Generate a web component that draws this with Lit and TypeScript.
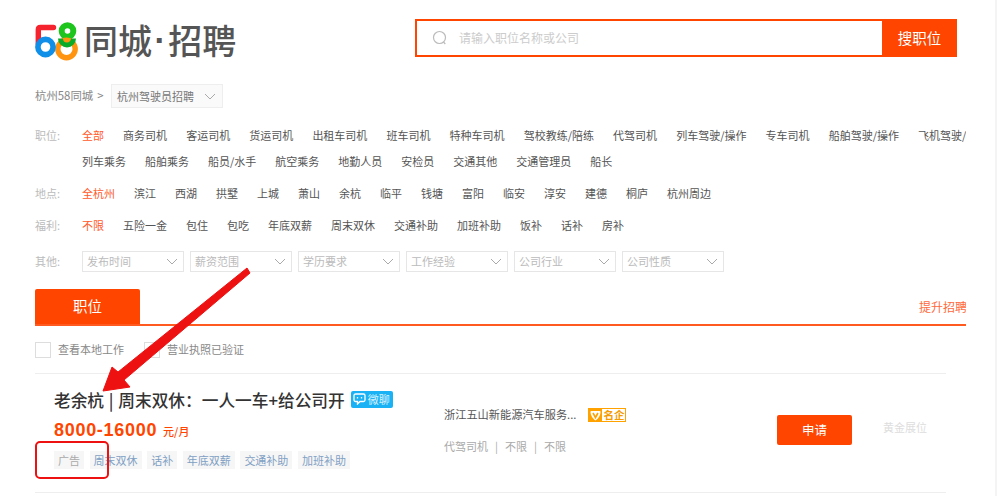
import { LitElement, html, css, svg } from "lit";
import { customElement } from "lit/decorators.js";

const chevron = html`<svg class="chev" width="12" height="7" viewBox="0 0 12 7"><path d="M1 1l5 5 5-5" fill="none" stroke="#aaa" stroke-width="1"/></svg>`;

const row1 = ["商务司机","客运司机","货运司机","出租车司机","班车司机","特种车司机","驾校教练/陪练","代驾司机","列车驾驶/操作","专车司机","船舶驾驶/操作","飞机驾驶/"];
const row2 = ["列车乘务","船舶乘务","船员/水手","航空乘务","地勤人员","安检员","交通其他","交通管理员","船长"];
const places = ["滨江","西湖","拱墅","上城","萧山","余杭","临平","钱塘","富阳","临安","淳安","建德","桐庐","杭州周边"];
const perks = ["五险一金","包住","包吃","年底双薪","周末双休","交通补助","加班补助","饭补","话补","房补"];
const selects = ["发布时间","薪资范围","学历要求","工作经验","公司行业","公司性质"];
const tags = ["周末双休","话补","年底双薪","交通补助","加班补助"];

@customElement("app-root")
export class AppRoot extends LitElement {
  static styles = css`
    :host {
      display: block;
      position: relative;
      width: 997px;
      height: 496px;
      overflow: hidden;
      background: #fff;
      font-family: "Noto Sans CJK SC", "Liberation Sans", sans-serif;
      color: #555;
      font-size: 11px;
      line-height: 1;
    }
    .page {
      width: 931px;
      height: 496px;
      margin-left: 35px;
      overflow: hidden;
      display: flex;
      flex-direction: column;
    }
    .strip {
      position: absolute;
      top: 0;
      right: 0;
      bottom: 0;
      width: 2px;
      background: #f4f4f4;
    }
    .header {
      height: 84px;
      flex: none;
      display: flex;
      align-items: flex-start;
    }
    .logo {
      display: flex;
      align-items: center;
      width: 380px;
      height: 40px;
      margin-top: 21px;
      flex: none;
    }
    .logo svg { display: block; flex: none; }
    .logo-text {
      display: flex;
      align-items: center;
      font-size: 34px;
      font-weight: 500;
      color: #555;
      margin-left: 5px;
      margin-bottom: 2px;
      white-space: nowrap;
      line-height: 40px;
    }
    .logo-dot {
      font-family: "Liberation Sans", sans-serif;
      font-weight: 700;
      margin: 0 2.5px;
    }
    .search {
      margin-top: 19px;
      width: 542px;
      height: 38px;
      flex: none;
      display: flex;
      box-sizing: border-box;
      border: 2px solid #ff4500;
    }
    .search-in {
      flex: 1;
      display: flex;
      align-items: center;
      padding-left: 15px;
      gap: 11px;
      color: #ccc;
      font-size: 12px;
    }
    .search-btn {
      width: 75px;
      margin: -2px -2px -2px 0;
      background: #ff4500;
      color: #fff;
      font-size: 14.5px;
      display: flex;
      align-items: center;
      justify-content: center;
    }
    .crumb {
      flex: none;
      height: 24px;
      display: flex;
      align-items: center;
      color: #888;
      margin-bottom: 14px;
    }
    .crumb-text { width: 76px; font-size: 11.4px; word-spacing: 1.5px; white-space: nowrap; }
    .crumb-sel {
      box-sizing: border-box;
      width: 112px;
      height: 24px;
      padding: 0 5px;
      display: flex;
      align-items: center;
      justify-content: space-between;
      background: #fafafa;
      border: 1px solid #eee;
      color: #777;
    }
    .crumb-sel .chev { margin-right: 1px; }
    .frow {
      display: flex;
      flex: none;
      height: 26px;
      align-items: center;
      white-space: nowrap;
    }
    .frow.gap { margin-top: 6px; }
    .frow.gap2 { margin-top: 6px; }
    .flabel { width: 47px; flex: none; color: #bbb; }
    .items { display: flex; gap: 19px; }
    .items.wide { gap: 19.1px; }
    .on { color: #ff5a2b; }
    .frow.sels { height: 21px; margin-top: 13px; }
    .sel-list { display: flex; gap: 6px; }
    .sel {
      box-sizing: border-box;
      width: 102px;
      height: 21px;
      padding: 0 5px 0 4px;
      border: 1px solid #e6e6e6;
      color: #bbb;
      display: flex;
      align-items: center;
      justify-content: space-between;
    }
    .tabs {
      flex: none;
      margin-top: 17px;
      height: 37px;
      box-sizing: border-box;
      border-bottom: 2px solid #ff5a1f;
      display: flex;
      justify-content: space-between;
      white-space: nowrap;
    }
    .tab {
      width: 105px;
      height: 35px;
      background: #ff4500;
      color: #fff;
      font-size: 14.5px;
      display: flex;
      align-items: center;
      justify-content: center;
      border-radius: 2px 2px 0 0;
    }
    .promote {
      color: #ff6a3c;
      font-size: 12px;
      width: 47px;
      overflow: hidden;
      margin-top: 12px;
    }
    .checks {
      flex: none;
      height: 47px;
      display: flex;
      align-items: center;
      color: #888;
      white-space: nowrap;
    }
    .cb {
      width: 16px;
      height: 16px;
      box-sizing: border-box;
      border: 1px solid #ddd;
      margin-right: 7px;
    }
    .cb-label { width: 86px; }
    .job {
      flex: none;
      width: 911px;
      height: 120px;
      box-sizing: border-box;
      border-top: 1px solid #eee;
      border-bottom: 1px solid #eee;
      padding-left: 19px;
      display: flex;
    }
    .job-main { width: 390px; flex: none; padding-top: 17px; }
    .title {
      display: flex;
      align-items: center;
      font-size: 16.7px;
      font-weight: 500;
      color: #333;
      height: 18px;
      white-space: nowrap;
      word-spacing: 1px;
    }
    .chat {
      margin-left: 6px;
      margin-top: -2px;
      width: 42px;
      height: 17px;
      border-radius: 2px;
      background: #1ab1f5;
      color: #d9f3ff;
      font-size: 11px;
      font-weight: 400;
      display: flex;
      align-items: center;
      gap: 2px;
      padding-left: 2px;
      box-sizing: border-box;
    }
    .salary {
      margin-top: 12px;
      display: flex;
      align-items: baseline;
      color: #ff4500;
      height: 18px;
    }
    .num {
      font-family: "Liberation Sans", sans-serif;
      font-size: 18px;
      font-weight: 700;
      letter-spacing: 0.7px;
    }
    .unit { font-size: 11px; margin-left: 6px; font-weight: 500; }
    .tags { display: flex; gap: 5.6px; margin-top: 12px; }
    .tag {
      height: 18px;
      padding: 0 4px;
      background: #f6f6f6;
      color: #7fa0c4;
      display: flex;
      align-items: center;
    }
    .tag.ad { color: #aaa; }
    .job-co { width: 333px; flex: none; padding-top: 34px; }
    .co-line { display: flex; align-items: center; height: 14px; color: #555; font-size: 11.2px; white-space: nowrap; }
    .badge {
      margin-left: 12px;
      width: 38px;
      height: 14px;
      box-sizing: border-box;
      border: 1px solid #ffa200;
      display: flex;
      align-items: center;
      color: #f59c00;
      font-size: 10.5px;
      font-weight: 700;
      flex: none;
    }
    .badge-v {
      width: 13px;
      height: 100%;
      flex: none;
      background: #ffa200;
      margin-right: 1px;
      display: flex;
      align-items: center;
      justify-content: center;
    }
    .meta { margin-top: 19px; color: #aaa; display: flex; gap: 7px; }
    .apply {
      width: 75px;
      height: 30px;
      margin-top: 41px;
      background: #ff4500;
      color: #fff;
      border-radius: 2px;
      font-size: 12.5px;
      display: flex;
      align-items: center;
      justify-content: center;
      flex: none;
    }
    .gold { margin: 48px 0 0 31px; color: #ddd; white-space: nowrap; }
    .overlay {
      position: absolute;
      left: 0;
      top: 0;
      pointer-events: none;
    }
    .ring {
      position: absolute;
      left: 35px;
      top: 441px;
      width: 74px;
      height: 38px;
      box-sizing: border-box;
      border: 2.5px solid #ee1111;
      border-radius: 5px;
    }
  `;

  render() {
    return html`
      <div class="page">
        <div class="header">
          <div class="logo">
            <svg width="44" height="40" viewBox="36 21 44 40">
              ${svg`
                <circle cx="68.500" cy="31" r="5.800" fill="none" stroke="#1dc51d" stroke-width="6"/>
                <circle cx="67.500" cy="49" r="8.700" fill="none" stroke="#ff9410" stroke-width="5.400"/>
                <path d="M61.500 38.500a6.500 6.500 0 0 0 13 0" fill="none" stroke="#0bab2a" stroke-width="5"/>
                <path d="M54.500 27.500H41.500c-1.500 0-2.200.8-2.200 2.200V44" fill="none" stroke="#f5232e" stroke-width="5.400" stroke-linecap="round"/>
                <circle cx="46.500" cy="47" r="7.600" fill="none" stroke="#0f8fe8" stroke-width="5.600"/>
              `}
            </svg>
            <span class="logo-text"><span>同城</span><span class="logo-dot">·</span><span>招聘</span></span>
          </div>
          <div class="search">
            <div class="search-in">
              <svg width="16" height="16" viewBox="0 0 16 16"><circle cx="7.500" cy="7.500" r="6" fill="none" stroke="#bbb" stroke-width="1.200"/><path d="M11.500 12l1.800 2" stroke="#bbb" stroke-width="1.200"/></svg>
              <span>请输入职位名称或公司</span>
            </div>
            <div class="search-btn">搜职位</div>
          </div>
        </div>
        <div class="crumb">
          <span class="crumb-text">杭州58同城 &gt;</span>
          <div class="crumb-sel"><span>杭州驾驶员招聘</span>${chevron}</div>
        </div>
        <div class="frow">
          <span class="flabel">职位:</span>
          <div class="items wide"><span class="on">全部</span>${row1.map((t) => html`<span>${t}</span>`)}</div>
        </div>
        <div class="frow">
          <span class="flabel"></span>
          <div class="items">${row2.map((t) => html`<span>${t}</span>`)}</div>
        </div>
        <div class="frow gap">
          <span class="flabel">地点:</span>
          <div class="items"><span class="on">全杭州</span>${places.map((t) => html`<span>${t}</span>`)}</div>
        </div>
        <div class="frow gap2">
          <span class="flabel">福利:</span>
          <div class="items"><span class="on">不限</span>${perks.map((t) => html`<span>${t}</span>`)}</div>
        </div>
        <div class="frow sels">
          <span class="flabel">其他:</span>
          <div class="sel-list">${selects.map((t) => html`<div class="sel"><span>${t}</span>${chevron}</div>`)}</div>
        </div>
        <div class="tabs">
          <div class="tab">职位</div>
          <div class="promote">提升招聘效果</div>
        </div>
        <div class="checks">
          <span class="cb"></span><span class="cb-label">查看本地工作</span>
          <span class="cb"></span><span>营业执照已验证</span>
        </div>
        <div class="job">
          <div class="job-main">
            <div class="title">
              <span>老余杭 | 周末双休：一人一车+给公司开</span>
              <span class="chat">
                <svg width="13" height="12" viewBox="0 0 13 12"><path d="M2.500 1h8A1.500 1.500 0 0 1 12 2.500v4.500A1.500 1.500 0 0 1 10.500 8.500H7L4.500 11V8.500h-2A1.500 1.500 0 0 1 1 7V2.500A1.500 1.500 0 0 1 2.500 1z" fill="none" stroke="#fff" stroke-width="1.300"/><path d="M4.500 4v1.500M8.500 4v1.500" stroke="#fff" stroke-width="1.300"/></svg>
                微聊
              </span>
            </div>
            <div class="salary"><span class="num">8000-16000</span><span class="unit">元/月</span></div>
            <div class="tags">
              <span class="tag ad">广告</span>
              ${tags.map((t) => html`<span class="tag">${t}</span>`)}
            </div>
          </div>
          <div class="job-co">
            <div class="co-line">
              <span>浙江五山新能源汽车服务...</span>
              <span class="badge">
                <span class="badge-v"><svg width="11" height="11" viewBox="0 0 11 11"><path d="M1.500 1h8c.6 0 1 .4 1 1 0 3.500-2.500 7-5 8.500C3 9 .5 5.500.5 2c0-.6.4-1 1-1z" fill="#fff"/><path d="M3 3l2.500 4.500L8 3" fill="none" stroke="#ffa200" stroke-width="1.600"/></svg></span><span>名企</span>
              </span>
            </div>
            <div class="meta"><span>代驾司机</span><span>|</span><span>不限</span><span>|</span><span>不限</span></div>
          </div>
          <div class="apply">申请</div>
          <div class="gold">黄金展位</div>
        </div>
      </div>
      <div class="strip"></div>
      <svg class="overlay" width="997" height="496" viewBox="0 0 997 496">
        <path d="M247 268L118 372L112 367L103 391L130 387L124 380L250 273Z" fill="#ee1111" stroke="#ee1111" stroke-width="1" stroke-linejoin="round"/>
      </svg>
      <div class="ring"></div>
    `;
  }
}
